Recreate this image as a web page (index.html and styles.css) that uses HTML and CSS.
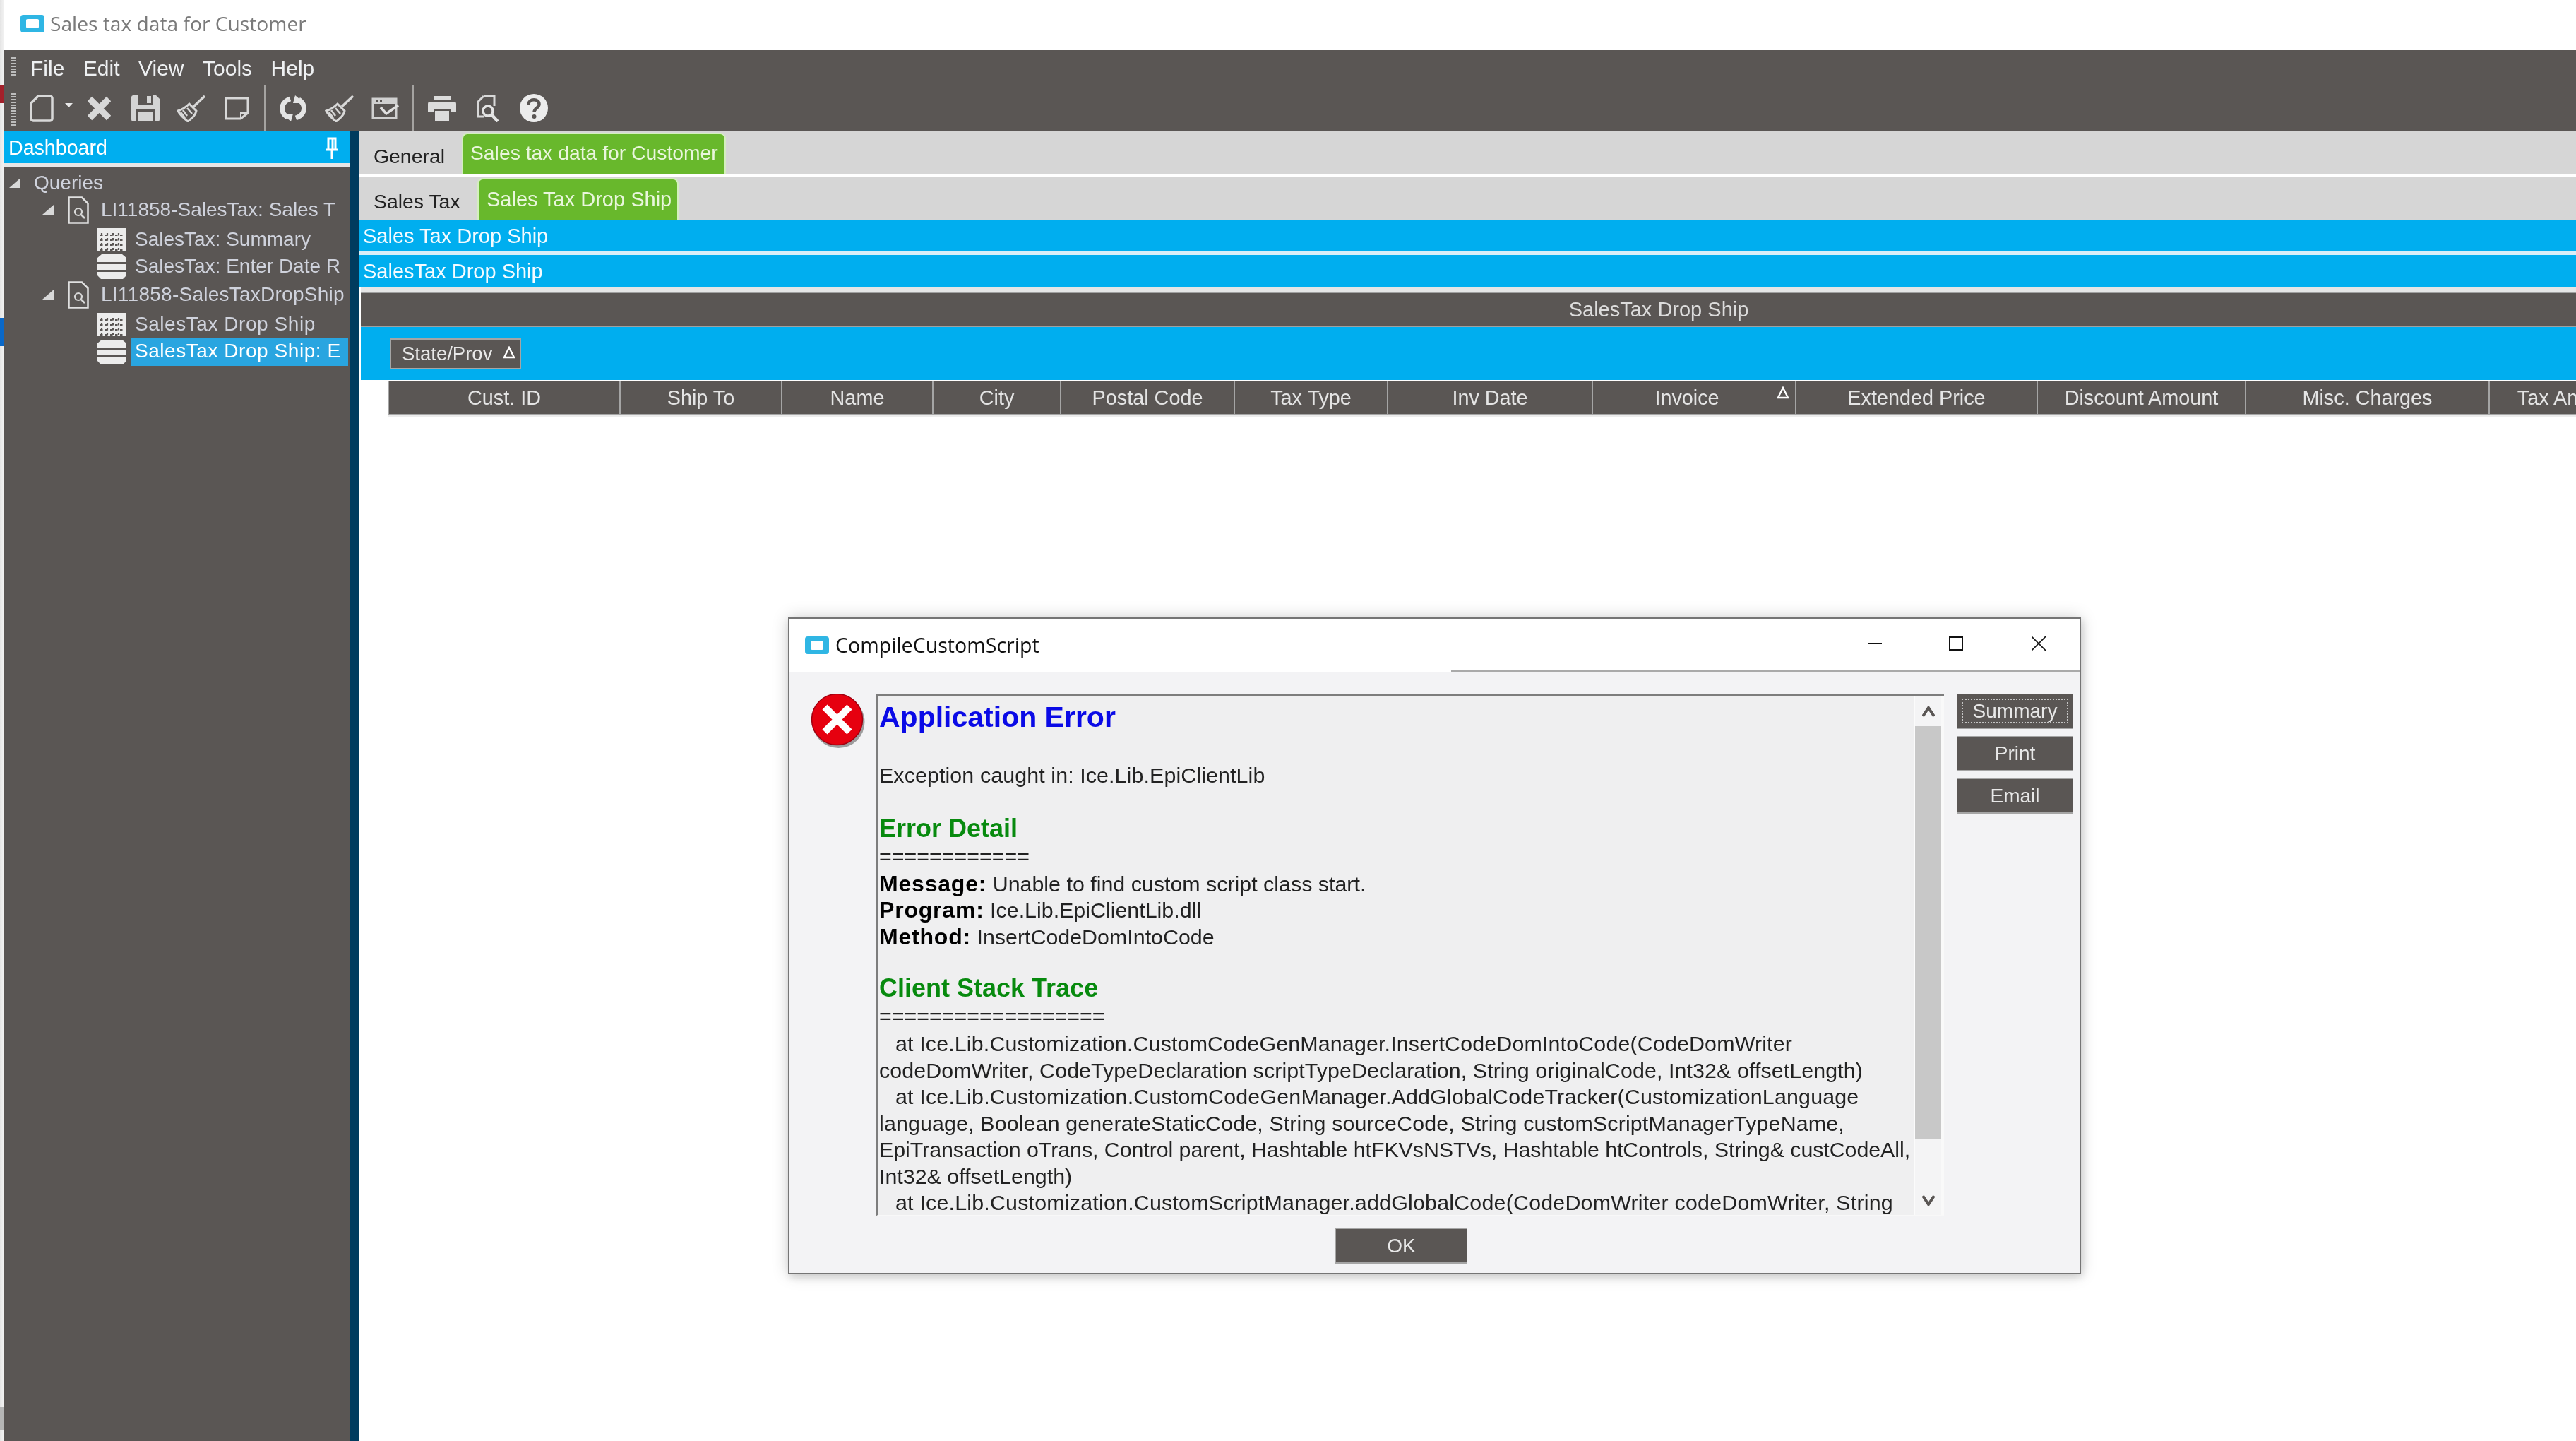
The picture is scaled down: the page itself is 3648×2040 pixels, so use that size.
FILE: index.html
```html
<!DOCTYPE html>
<html lang="en">
<head>
<meta charset="utf-8">
<title>Sales tax data for Customer</title>
<link rel="stylesheet" href="styles.css">
</head>
<body>
<div class="app">
  <div class="edge"><i class="edge-red"></i><i class="edge-blue"></i><i class="edge-gray"></i></div>
  <div class="main">
    <header class="titlebar">
      <svg class="app-icon" viewBox="0 0 34 25"><rect width="34" height="25" rx="4" fill="#2fb6e4"/><rect x="8" y="6" width="18" height="13" rx="2" fill="#fff"/></svg>
      <span>Sales tax data for Customer</span>
    </header>
    <nav class="menubar">
      <i class="grip grip-short"></i>
      <span class="m-file">File</span><span>Edit</span><span>View</span><span>Tools</span><span>Help</span>
    </nav>
    <div class="toolbar">
      <i class="grip grip-long"></i>
      <svg class="ic ic-new" viewBox="0 0 34 39"><path d="M12 2H29a3 3 0 0 1 3 3V34a3 3 0 0 1-3 3H5a3 3 0 0 1-3-3V12Z" fill="none" stroke="#d8d8d8" stroke-width="3.5"/></svg>
      <svg class="ic ic-dd" viewBox="0 0 11 6"><path d="M0 0H11L5.5 6Z" fill="#e8e8e8"/></svg>
      <svg class="ic ic-x" viewBox="0 0 35 35"><path d="M4 4L31 31M31 4L4 31" stroke="#d8d8d8" stroke-width="9" fill="none"/></svg>
      <svg class="ic ic-save" viewBox="0 0 40 37"><path d="M3 0H35L40 5V34a3 3 0 0 1-3 3H3a3 3 0 0 1-3-3V3a3 3 0 0 1 3-3Z" fill="#d4d4d4"/><path d="M9 0H30V13H9Z" fill="#5a5654"/><path d="M22 1H28V11H22Z" fill="#d4d4d4"/><path d="M7 20H33V37H7Z" fill="#5a5654"/><path d="M9 23H31V37H9Z" fill="#d4d4d4"/></svg>
      <svg class="ic ic-broom" viewBox="0 0 42 39"><path d="M24 17L40 2" stroke="#d8d8d8" stroke-width="3.5" fill="none"/><path d="M18 13L28 23C27 29 22 33 16 38C11 34 5 29 2 23C8 21 13 18 18 13Z" fill="none" stroke="#d8d8d8" stroke-width="3"/><path d="M9 22L15 30M15 19L22 27M6 25L12 33" stroke="#d8d8d8" stroke-width="2.5" fill="none"/></svg>
      <svg class="ic ic-note" viewBox="0 0 35 33"><path d="M2 2H33V23L23 31H2Z" fill="none" stroke="#d8d8d8" stroke-width="3"/><path d="M23 31V23H33" fill="none" stroke="#d8d8d8" stroke-width="2"/></svg>
      <i class="tb-sep sep-a"></i>
      <svg class="ic ic-refresh" viewBox="0 0 40 37"><path d="M16 5C7 8 3 15 5 22C6 26 9 29 12 31" fill="none" stroke="#e4e4e4" stroke-width="7"/><path d="M4 26L20 26L17 37Z" fill="#e4e4e4"/><path d="M24 32C33 29 37 22 35 15C34 11 31 8 28 6" fill="none" stroke="#e4e4e4" stroke-width="7"/><path d="M36 11L20 11L23 0Z" fill="#e4e4e4"/></svg>
      <svg class="ic ic-broom ic-broom2" viewBox="0 0 42 39"><path d="M24 17L40 2" stroke="#d8d8d8" stroke-width="3.5" fill="none"/><path d="M18 13L28 23C27 29 22 33 16 38C11 34 5 29 2 23C8 21 13 18 18 13Z" fill="none" stroke="#d8d8d8" stroke-width="3"/><path d="M9 22L15 30M15 19L22 27M6 25L12 33" stroke="#d8d8d8" stroke-width="2.5" fill="none"/></svg>
      <svg class="ic ic-check" viewBox="0 0 40 31"><path d="M2 2H35V29H2Z" fill="none" stroke="#d0d0d0" stroke-width="3"/><path d="M2 2H35V9H2Z" fill="#d0d0d0"/><path d="M6 4H9V7H6ZM12 4H15V7H12Z" fill="#5a5654"/><path d="M13 14L21 23L38 11" fill="none" stroke="#e0e0e0" stroke-width="3.5"/></svg>
      <i class="tb-sep sep-b"></i>
      <svg class="ic ic-print" viewBox="0 0 40 35"><path d="M8 0H32V5H8Z" fill="#dcdcdc"/><path d="M3 8H37a3 3 0 0 1 3 3V23H32V18H8V23H0V11a3 3 0 0 1 3-3Z" fill="#dcdcdc"/><path d="M10 21H30V35H10Z" fill="#dcdcdc"/></svg>
      <svg class="ic ic-preview" viewBox="0 0 31 39"><path d="M10 2H25V16M10 2L2 10V31H10" fill="none" stroke="#d8d8d8" stroke-width="3"/><circle cx="16" cy="23" r="7" fill="none" stroke="#e4e4e4" stroke-width="3.5"/><path d="M21 28L30 38" stroke="#e4e4e4" stroke-width="4.5"/></svg>
      <svg class="ic ic-help" viewBox="0 0 40 40"><circle cx="20" cy="20" r="20" fill="#ececec"/><path d="M12.5 15C12.5 6 27.5 6 27.5 14.5C27.5 20 20.5 19.5 20.5 26" fill="none" stroke="#5a5654" stroke-width="4.5"/><circle cx="20.5" cy="32" r="3" fill="#5a5654"/></svg>
    </div>
    <div class="workspace">
      <aside class="sidebar">
        <div class="dash-head">
          <span>Dashboard</span>
          <svg class="pin" viewBox="0 0 18 31"><path d="M4 2H14V18H4ZM0 18H18M9 18V31M10 3V17" fill="none" stroke="#fff" stroke-width="3"/></svg>
        </div>
        <ul class="tree">
          <li class="row lvl0"><svg class="tri" viewBox="0 0 16 14"><path d="M16 0V14H0Z" fill="#d8d8d8"/></svg><span class="lbl lbl0">Queries</span></li>
          <li class="row lvl1"><svg class="tri" viewBox="0 0 16 14"><path d="M16 0V14H0Z" fill="#d8d8d8"/></svg><svg class="doc" viewBox="0 0 30 39"><path d="M1.5 1.5H20L28.5 10V37.5H1.5Z" fill="none" stroke="#e0e0e0" stroke-width="2.5"/><circle cx="15" cy="22" r="5" fill="none" stroke="#d8d8d8" stroke-width="2.2"/><path d="M19 26L24 31" stroke="#d8d8d8" stroke-width="2.5"/></svg><span class="lbl">LI11858-SalesTax: Sales T</span></li>
          <li class="row lvl2 gap4"><svg class="gridic" viewBox="0 0 41 33"><rect width="41" height="33" fill="#ececec"/><path d="M4 10H37M4 17H37M4 24H37M4 31H37M6 7V31M14 7V31M22 7V31M30 7V31" stroke="#5a5654" stroke-width="2.2" stroke-dasharray="3.5 3.5" fill="none"/></svg><span class="lbl">SalesTax: Summary</span></li>
          <li class="row lvl2"><svg class="stack" viewBox="0 0 41 35"><path d="M6 0H35L41 5V11H0V5ZM0 14H41V22H0ZM0 25H41V30L36 35H5L0 30Z" fill="#ececec"/></svg><span class="lbl">SalesTax: Enter Date R</span></li>
          <li class="row lvl1 gap2"><svg class="tri" viewBox="0 0 16 14"><path d="M16 0V14H0Z" fill="#d8d8d8"/></svg><svg class="doc" viewBox="0 0 30 39"><path d="M1.5 1.5H20L28.5 10V37.5H1.5Z" fill="none" stroke="#e0e0e0" stroke-width="2.5"/><circle cx="15" cy="22" r="5" fill="none" stroke="#d8d8d8" stroke-width="2.2"/><path d="M19 26L24 31" stroke="#d8d8d8" stroke-width="2.5"/></svg><span class="lbl lbl-wide">LI11858-SalesTaxDropShip</span></li>
          <li class="row lvl2 gap4"><svg class="gridic" viewBox="0 0 41 33"><rect width="41" height="33" fill="#ececec"/><path d="M4 10H37M4 17H37M4 24H37M4 31H37M6 7V31M14 7V31M22 7V31M30 7V31" stroke="#5a5654" stroke-width="2.2" stroke-dasharray="3.5 3.5" fill="none"/></svg><span class="lbl lbl-wider">SalesTax Drop Ship</span></li>
          <li class="row lvl2 sel"><svg class="stack" viewBox="0 0 41 35"><path d="M6 0H35L41 5V11H0V5ZM0 14H41V22H0ZM0 25H41V30L36 35H5L0 30Z" fill="#ececec"/></svg><span class="lbl lbl-wider">SalesTax Drop Ship: E</span></li>
        </ul>
      </aside>
      <div class="divider"></div>
      <section class="content">
        <div class="tabs tabs-a">
          <span class="tab tab-general">General</span>
          <span class="tab-on tab-on-a">Sales tax data for Customer</span>
        </div>
        <div class="tabs tabs-b">
          <span class="tab tab-sales">Sales Tax</span>
          <span class="tab-on tab-on-b">Sales Tax Drop Ship</span>
        </div>
        <div class="bar bar-a">Sales Tax Drop Ship</div>
        <div class="bar bar-b">SalesTax Drop Ship</div>
        <div class="wide">
          <div class="section-title">SalesTax Drop Ship</div>
          <div class="group-zone">
            <div class="chip">State/Prov<svg class="sort" viewBox="0 0 18 18"><path d="M9 2L16 16H2Z" fill="none" stroke="#fff" stroke-width="2.4"/></svg></div>
          </div>
        </div>
        <div class="grid-head">
          <div class="th">Cust. ID</div>
          <div class="th">Ship To</div>
          <div class="th">Name</div>
          <div class="th">City</div>
          <div class="th">Postal Code</div>
          <div class="th">Tax Type</div>
          <div class="th">Inv Date</div>
          <div class="th th-sorted">Invoice<svg class="sort sort-th" viewBox="0 0 18 18"><path d="M9 2L16 16H2Z" fill="none" stroke="#fff" stroke-width="2.4"/></svg></div>
          <div class="th">Extended Price</div>
          <div class="th">Discount Amount</div>
          <div class="th">Misc. Charges</div>
          <div class="th">Tax Amount</div>
        </div>
      </section>
    </div>
  </div>
  <div class="dialog">
    <header class="dlg-title">
      <svg class="dlg-icon" viewBox="0 0 34 25"><rect width="34" height="25" rx="4" fill="#2fb6e4"/><rect x="8" y="6" width="18" height="13" rx="2" fill="#fff"/></svg>
      <span class="dlg-name">CompileCustomScript</span>
      <svg class="win win-min" viewBox="0 0 20 20"><path d="M0 10H20" stroke="#111" stroke-width="2"/></svg>
      <svg class="win win-max" viewBox="0 0 20 20"><rect x="1" y="1" width="18" height="18" fill="none" stroke="#111" stroke-width="2"/></svg>
      <svg class="win win-close" viewBox="0 0 20 20"><path d="M0 0L20 20M20 0L0 20" stroke="#111" stroke-width="1.6"/></svg>
    </header>
    <div class="dlg-body">
      <div class="dlg-main">
        <svg class="err" viewBox="0 0 80 80"><circle cx="40.5" cy="40" r="37" fill="#555" opacity=".55"/><circle cx="38.5" cy="36.5" r="36" fill="#e6000f" stroke="#a00010" stroke-width="1.5"/><path d="M21 19L56 54M56 19L21 54" stroke="#fff" stroke-width="10"/></svg>
        <div class="textbox">
          <div class="msg">
            <h1 class="h-app">Application Error</h1>
            <p class="p-exc">Exception caught in: Ice.Lib.EpiClientLib</p>
            <h2 class="h-sec h-detail">Error Detail</h2>
            <p class="eq">============</p>
            <p class="info"><b>Message:</b> Unable to find custom script class start.</p>
            <p class="info"><b>Program:</b> Ice.Lib.EpiClientLib.dll</p>
            <p class="info"><b>Method:</b> InsertCodeDomIntoCode</p>
            <h2 class="h-sec h-trace">Client Stack Trace</h2>
            <p class="eq">==================</p>
            <p class="info at fit-a">at Ice.Lib.Customization.CustomCodeGenManager.InsertCodeDomIntoCode(CodeDomWriter</p>
            <p class="info fit-b">codeDomWriter, CodeTypeDeclaration scriptTypeDeclaration, String originalCode, Int32&amp; offsetLength)</p>
            <p class="info at fit-c">at Ice.Lib.Customization.CustomCodeGenManager.AddGlobalCodeTracker(CustomizationLanguage</p>
            <p class="info fit-d">language, Boolean generateStaticCode, String sourceCode, String customScriptManagerTypeName,</p>
            <p class="info fit-e">EpiTransaction oTrans, Control parent, Hashtable htFKVsNSTVs, Hashtable htControls, String&amp; custCodeAll,</p>
            <p class="info">Int32&amp; offsetLength)</p>
            <p class="info at fit-f">at Ice.Lib.Customization.CustomScriptManager.addGlobalCode(CodeDomWriter codeDomWriter, String</p>
          </div>
          <div class="scroll">
            <svg class="arrow arrow-up" viewBox="0 0 18 16"><path d="M1 15L9 3L17 15" fill="none" stroke="#5a5654" stroke-width="4"/></svg>
            <div class="thumb"></div>
            <svg class="arrow arrow-down" viewBox="0 0 18 16"><path d="M1 1L9 13L17 1" fill="none" stroke="#5a5654" stroke-width="4"/></svg>
          </div>
        </div>
        <div class="dlg-btns">
          <button class="btn btn-focus"><span>Summary</span></button>
          <button class="btn">Print</button>
          <button class="btn">Email</button>
        </div>
      </div>
      <div class="dlg-foot"><button class="btn btn-ok">OK</button></div>
    </div>
  </div>
</div>
</body>
</html>
```
FILE: styles.css
```css
* { box-sizing: border-box; }
html, body { margin: 0; padding: 0; }
body { background: #fff; font-family: "Liberation Sans", Arial, sans-serif; }
ul, p, h1, h2 { margin: 0; padding: 0; }
.app { position: relative; display: flex; width: 3648px; height: 2040px; overflow: hidden; filter: blur(.5px); }

.edge { flex: none; width: 6px; background: linear-gradient(90deg, #e4e4e4, #f4f4f4); padding-top: 120px; }
.edge i { display: block; width: 5px; }
.edge-red { height: 26px; background: #a3202a; }
.edge-blue { height: 40px; margin-top: 304px; background: #0a68c8; }
.edge-gray { height: 33px; margin-top: 1502px; background: #b5b5b5; }

.main { flex: 1; min-width: 0; display: flex; flex-direction: column; }

.titlebar { flex: none; height: 71px; display: flex; align-items: center; padding-left: 23px; background: #fff; color: #7a7a7a; font: 28.2px "Open Sans", sans-serif; padding-bottom: 5px; }
.app-icon { width: 34px; height: 25px; margin-right: 8px; }

.menubar { flex: none; height: 49px; display: flex; align-items: center; background: #5a5654; color: #eef0f2; font-size: 30px; padding-left: 9px; padding-top: 2px; }
.menubar span { margin-left: 26.5px; }
.menubar .m-file { margin-left: 21px; }
.grip { display: block; width: 7px; background: repeating-linear-gradient(#bdbdbd 0 2px, transparent 2px 4px); }
.grip-short { height: 28px; margin-top: -4px; }
.grip-long { height: 48px; margin-top: 6px; }

.toolbar { flex: none; height: 66px; display: flex; align-items: center; background: #5a5654; padding-left: 9px; }
.ic { display: block; flex: none; }
.ic-new { width: 34px; height: 39px; margin-left: 20px; }
.ic-dd { width: 11px; height: 6px; margin-left: 16px; margin-top: -8px; }
.ic-x { width: 35px; height: 35px; margin-left: 20px; }
.ic-save { width: 40px; height: 37px; margin-left: 28px; }
.ic-broom { width: 42px; height: 39px; margin-left: 24px; }
.ic-note { width: 35px; height: 33px; margin-left: 26px; }
.tb-sep { flex: none; align-self: stretch; width: 2px; background: #a5a3a1; }
.sep-a { margin-left: 21px; }
.sep-b { margin-left: 18px; }
.ic-refresh { width: 40px; height: 37px; margin-left: 19px; }
.ic-broom2 { margin-left: 25px; }
.ic-check { width: 40px; height: 31px; margin-left: 24px; }
.ic-print { width: 40px; height: 35px; margin-left: 20px; }
.ic-preview { width: 31px; height: 39px; margin-left: 29px; }
.ic-help { width: 40px; height: 40px; margin-left: 30px; }

.workspace { flex: 1; min-height: 0; display: flex; }
.sidebar { flex: none; width: 490px; background: #5a5654; }
.divider { flex: none; width: 13px; background: #003b5e; }

.dash-head { height: 50px; display: flex; align-items: center; justify-content: space-between; background: #00aeef; border-bottom: 5px solid #e6e6e6; color: #fff; font-size: 28.6px; padding: 1px 17px 0 6px; }
.pin { width: 18px; height: 31px; }

.tree { list-style: none; padding-top: 4px; color: #cfd2dc; font-size: 28px; }
.row { display: flex; align-items: center; height: 38px; white-space: nowrap; }
.lvl0 { padding-left: 7px; }
.lvl1 { padding-left: 54px; }
.lvl2 { padding-left: 132px; }
.gap2 { margin-top: 2px; }
.gap4 { margin-top: 4px; }
.tri { flex: none; width: 16px; height: 14px; }
.doc { flex: none; width: 30px; height: 39px; margin-left: 20px; }
.gridic { flex: none; width: 41px; height: 33px; }
.stack { flex: none; width: 41px; height: 35px; }
.lbl { margin-left: 12px; }
.lbl0 { margin-left: 19px; }
.lbl-wide { letter-spacing: .25px; }
.lbl-wider { letter-spacing: .55px; }
.doc + .lbl { margin-left: 17px; }
.sel { height: 40px; }
.sel .lbl { flex: 1; margin: 0 3px 0 7px; padding-left: 5px; height: 40px; line-height: 38px; background: #29a5e0; color: #fff; }

.content { flex: 1; min-width: 0; overflow: hidden; background: #fff; }
.tabs { display: flex; align-items: flex-end; background: #d6d6d6; font-size: 28.4px; white-space: nowrap; }
.tabs-a { height: 60px; }
.tabs-b { height: 60px; margin-top: 5px; }
.tab { color: #222; }
.tab-general { width: 145px; padding-left: 20px; padding-bottom: 8px; }
.tab-sales { width: 167px; padding-left: 20px; padding-bottom: 9px; }
.tab-on { background: #68b82c; color: #e9f6dc; border: 2px solid #d4efbf; border-bottom: 0; border-radius: 8px 8px 0 0; }
.tab-on-a { width: 374px; height: 58px; padding: 10px 0 0 10px; font-size: 28.3px; }
.tab-on-b { width: 285px; height: 59px; padding: 12px 0 0 11px; font-size: 29px; }

.bar { height: 45px; background: #00aeef; color: #f4fbff; font-size: 29px; padding: 4px 0 0 5px; line-height: 38px; white-space: nowrap; }
.bar-b { margin-top: 5px; box-shadow: 0 -5px 0 #d8eef8; }

.wide { width: 3676px; margin: 7px 0 0 2px; box-shadow: 0 -7px 0 #e6e6e6; }
.section-title { height: 50px; background: #5a5654; border-top: 2px solid #a0a0a0; border-bottom: 2px solid #a0a0a0; color: #dcdcdc; font-size: 29px; line-height: 46px; text-align: center; }
.group-zone { height: 75px; background: #00aeef; padding: 16px 0 0 41px; }
.chip { display: flex; align-items: center; width: 186px; height: 44px; background: #5a5654; border: 2px solid #a5a5a5; color: #e8e8e8; font-size: 27.5px; padding-left: 15px; }
.sort { display: block; width: 18px; height: 18px; flex: none; }
.chip .sort { margin: -4px 0 0 15px; }

.grid-head { display: grid; grid-template-columns: 328px 229px 214px 181px 246px 217px 290px 288px 342px 295px 345px 230px; width: 3205px; height: 49px; margin: 1px 0 0 41px; background: #5a5654; border-top: 1px solid #a5a5a5; border-bottom: 2px solid #a5a5a5; border-left: 1px solid #a5a5a5; box-shadow: 0 2px 0 #ececec; }
.th { display: flex; align-items: center; justify-content: center; border-right: 2px solid #a5a5a5; color: #e4e4e4; font-size: 28.8px; position: relative; }
.th-sorted { padding-right: 20px; }
.sort-th { position: absolute; right: 8px; top: 7px; }

.dialog { position: absolute; left: 1116px; top: 874px; width: 1831px; height: 930px; display: flex; flex-direction: column; background: #f3f3f5; border: 2px solid #757575; box-shadow: 0 0 22px rgba(0,0,0,.18), 2px 4px 10px rgba(0,0,0,.12); }
.dlg-title { position: relative; flex: none; height: 75px; display: flex; align-items: center; padding-left: 22px; background: #fff; }
.dlg-title::after { content: ""; position: absolute; right: 0; bottom: 0; width: 890px; height: 2px; background: #aaa; }
.dlg-icon { width: 34px; height: 25px; }
.dlg-name { margin-left: 9px; padding-bottom: 2px; color: #111; font: 28.6px "Open Sans", sans-serif; }
.win { position: absolute; width: 20px; height: 20px; top: 25px; }
.win-min { right: 280px; }
.win-max { right: 165px; }
.win-close { right: 48px; }

.dlg-body { flex: 1; min-height: 0; display: flex; flex-direction: column; }
.dlg-main { display: flex; padding-top: 31px; align-items: flex-start; }
.err { flex: none; width: 80px; height: 80px; margin: 0 13px 0 29px; }
.textbox { flex: none; display: flex; width: 1513px; height: 740px; background: #efeff0; border-top: 4px solid #7d7d7d; border-left: 3px solid #7d7d7d; border-bottom: 2px solid #f8f8f8; }
.msg { flex: 1; min-width: 0; overflow: hidden; padding-left: 2px; color: #222; font-size: 30.4px; line-height: 37.5px; white-space: nowrap; }
.msg b { color: #000; font-size: 32px; letter-spacing: .8px; }
.h-app { height: 58px; line-height: 58px; margin-bottom: 35px; color: #0a0ae6; font-size: 41px; font-weight: 700; }
.p-exc { margin-bottom: 36px; letter-spacing: .1px; }
.h-sec { height: 40px; line-height: 40px; color: #078a0e; font-size: 36px; font-weight: 700; }
.h-trace { margin-top: 34px; }
.eq { height: 38px; line-height: 38px; margin-bottom: 2px; }
.at { padding-left: 23px; }
.fit-a { letter-spacing: .15px; }
.fit-b { letter-spacing: .09px; }
.fit-c { letter-spacing: .18px; }
.fit-d { letter-spacing: .13px; }
.fit-e { letter-spacing: -.07px; }
.fit-f { letter-spacing: .2px; }

.scroll { flex: none; width: 43px; display: flex; flex-direction: column; align-items: center; background: #f4f4f5; border-left: 2px solid #fbfbfb; border-right: 4px solid #f9f9f9; }
.arrow { flex: none; width: 18px; height: 16px; }
.arrow-up { margin-top: 13px; margin-bottom: 13px; }
.thumb { flex: none; width: 100%; height: 585px; background: #c8c8c8; }
.arrow-down { margin-top: 79px; }

.dlg-btns { flex: none; display: flex; flex-direction: column; gap: 10px; margin-left: 18px; }
.btn { display: block; width: 165px; height: 50px; padding: 0; background: #5a5654; border: 1px solid #a5a5a5; border-bottom-width: 2px; color: #e8e8e8; font: 28px "Liberation Sans", sans-serif; text-align: center; }
.btn-focus { padding: 6px; }
.btn-focus span { display: block; height: 100%; line-height: 31px; border: 2px dotted #c4c4c4; }
.dlg-foot { padding: 17px 0 0 773px; }
.btn-ok { width: 187px; }
```
